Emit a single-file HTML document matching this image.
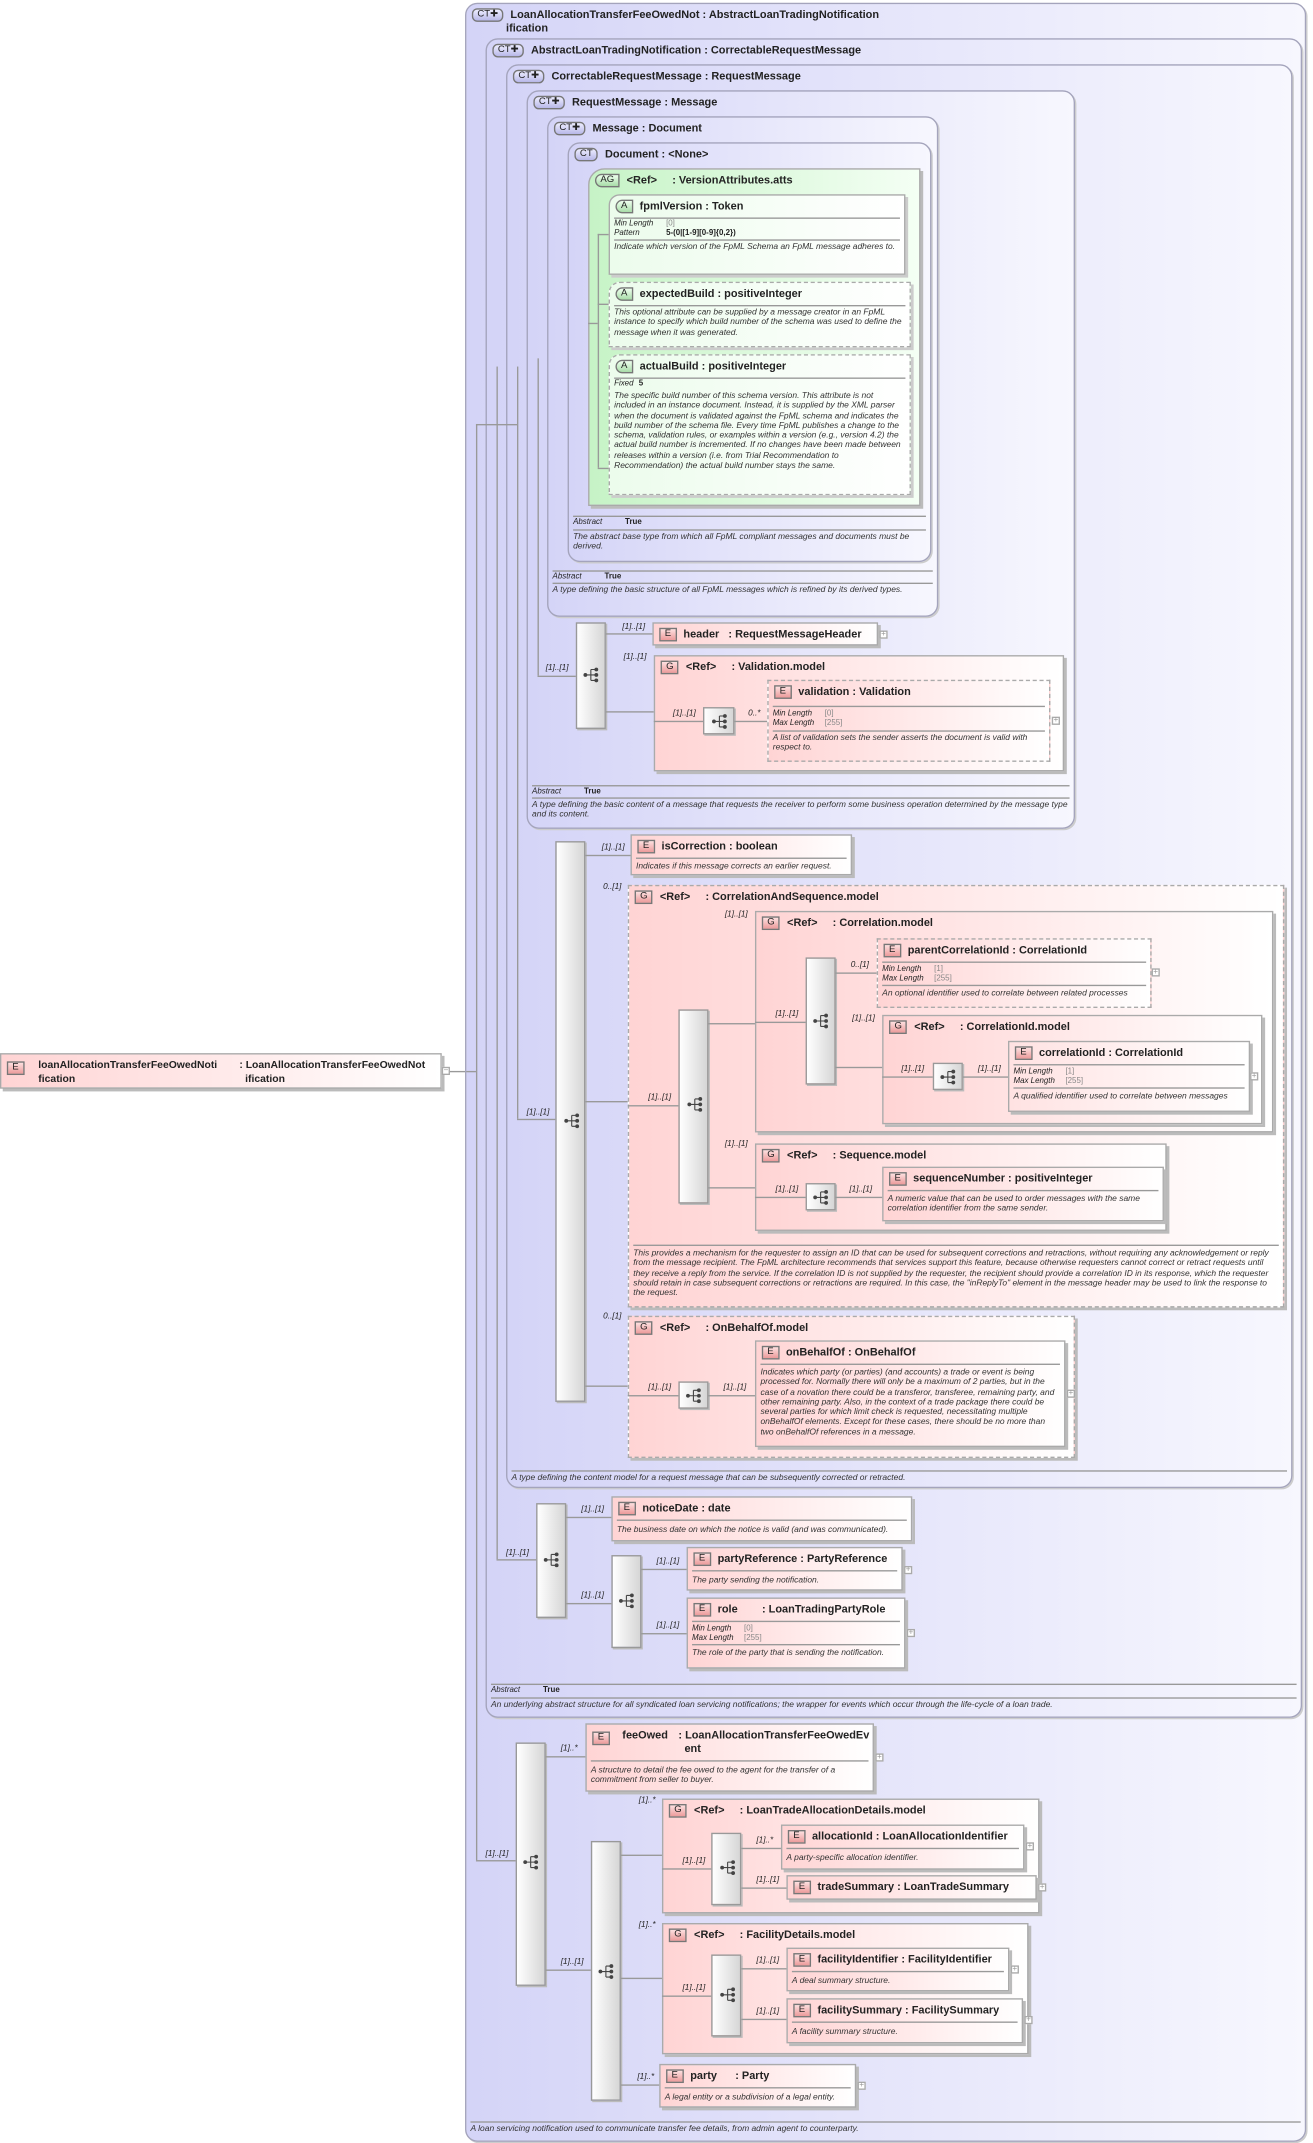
<!DOCTYPE html>
<html><head><meta charset="utf-8"><style>
html,body{margin:0;padding:0;background:#fff;width:1313px;height:2143px;overflow:hidden}
#w{position:relative;width:960px;height:1567px;transform:scale(1.36771);transform-origin:0 0;font-family:"Liberation Sans",sans-serif;color:#222}
.a{position:absolute;box-sizing:border-box}
.ct{border:1px solid #a4a4bc;border-radius:9px;background:linear-gradient(90deg,#d4d4f7,#f7f7fe);box-shadow:1px 1px 0 #ccc}
.ag{border:1px solid #aaa;background:linear-gradient(90deg,#c6f3c6,#f4fff4);box-shadow:2px 2px 0 #bbb}
.at{border:1px solid #aaa;background:linear-gradient(90deg,#ecfcec,#fff);box-shadow:2px 2px 0 #ccc}
.e{border:1px solid #aaa;background:linear-gradient(90deg,#ffd4d4,#fff);box-shadow:2px 2px 0 #bbb}
.dsh{border:1px dashed #aaa}
.h{position:absolute;left:4px;top:3px;font-size:8px;font-weight:bold;white-space:nowrap;line-height:10px}
.bd{display:inline-block;font-weight:normal;font-size:7px;border:1px solid #777;padding:0 3px;line-height:8px;margin-right:5px;vertical-align:1px}
.be{background:linear-gradient(#fde0e0,#ec9a9a)}
.bc{background:linear-gradient(#eef,#b8b8e8);border-radius:4px}
.bg{background:linear-gradient(#efe,#a8dca8);border-radius:5px 0 0 5px}
.r{position:absolute;left:3px;right:3px;border-top:1px solid #999}
.ds{position:absolute;left:3px;right:4px;font-size:6.2px;font-style:italic;line-height:7.3px;color:#333}
.pr{position:absolute;left:3px;font-size:5.8px;line-height:6.6px}
.pr i{display:inline-block;width:38px}
.pr span{color:#888}
.seq{border:1px solid #999;background:linear-gradient(90deg,#fff,#d6d6d6);box-shadow:1px 1px 0 #bbb}
.l{position:absolute;background:#999}
.m{position:absolute;font-size:6px;font-style:italic;white-space:nowrap}
.pl{position:absolute;width:6px;height:6px;border:1px solid #aaa;background:#fff;font-size:6px;line-height:5px;text-align:center;color:#999;box-sizing:border-box}
.ic{position:absolute;width:12px;height:11px}
</style></head><body><div id="w">
<svg width="0" height="0" style="position:absolute"><defs><g id="si"><circle cx="2" cy="5.5" r="1.4" fill="#444"/><path d="M2 5.5H6M6 1.5V9.5M6 1.5H10M6 5.5H10M6 9.5H10" stroke="#444" stroke-width="0.8" fill="none"/><circle cx="10" cy="1.5" r="1.4" fill="#444"/><circle cx="10" cy="5.5" r="1.4" fill="#444"/><circle cx="10" cy="9.5" r="1.4" fill="#444"/></g></defs></svg>

<div class="a e" style="left:0;top:770px;width:323px;height:26px"><div class="h" style="font-size:7.6px"><span class="bd be" style="position:absolute;left:0;top:2px">E</span><span style="position:absolute;left:23px;top:0">loanAllocationTransferFeeOwedNoti<br>fication</span><span style="position:absolute;left:170px;top:0">: LoanAllocationTransferFeeOwedNot<br>&nbsp;&nbsp;ification</span></div></div>
<div class="pl" style="left:323px;top:780px">−</div>
<div class="l" style="left:329px;top:783px;width:12px;height:1px"></div>

<div class="a ct" style="left:340px;top:2px;width:615px;height:1564px"><div class="h"><span class="bd bc">CT✚</span>LoanAllocationTransferFeeOwedNot : AbstractLoanTradingNotification<br><span style="margin-left:25px">ification</span></div>
<div class="r" style="top:1548px"></div><div class="ds" style="top:1550px">A loan servicing notification used to communicate transfer fee details, from admin agent to counterparty.</div></div>
<div class="a ct" style="left:355px;top:28px;width:597px;height:1228px"><div class="h"><span class="bd bc">CT✚</span>AbstractLoanTradingNotification : CorrectableRequestMessage</div>
<div class="r" style="top:1202px"></div><div class="pr" style="top:1204px"><i>Abstract</i><b>True</b></div><div class="r" style="top:1212px"></div><div class="ds" style="top:1214px">An underlying abstract structure for all syndicated loan servicing notifications; the wrapper for events which occur through the life-cycle of a loan trade.</div></div>
<div class="a ct" style="left:370px;top:47px;width:575px;height:1041px"><div class="h"><span class="bd bc">CT✚</span>CorrectableRequestMessage : RequestMessage</div>
<div class="r" style="top:1027px"></div><div class="ds" style="top:1029px">A type defining the content model for a request message that can be subsequently corrected or retracted.</div></div>
<div class="a ct" style="left:385px;top:66px;width:401px;height:540px"><div class="h"><span class="bd bc">CT✚</span>RequestMessage : Message</div>
<div class="r" style="top:507px"></div><div class="pr" style="top:509px"><i>Abstract</i><b>True</b></div><div class="r" style="top:516px"></div><div class="ds" style="top:518px">A type defining the basic content of a message that requests the receiver to perform some business operation determined by the message type and its content.</div></div>
<div class="a ct" style="left:400px;top:85px;width:286px;height:366px"><div class="h"><span class="bd bc">CT✚</span>Message : Document</div>
<div class="r" style="top:331px"></div><div class="pr" style="top:333px"><i>Abstract</i><b>True</b></div><div class="r" style="top:340px"></div><div class="ds" style="top:342px">A type defining the basic structure of all FpML messages which is refined by its derived types.</div></div>
<div class="a ct" style="left:415px;top:104px;width:266px;height:307px"><div class="h"><span class="bd bc">CT</span>Document : &lt;None&gt;</div>
<div class="r" style="top:272px"></div><div class="pr" style="top:274px"><i>Abstract</i><b>True</b></div><div class="r" style="top:282px"></div><div class="ds" style="top:284px">The abstract base type from which all FpML compliant messages and documents must be derived.</div></div>

<div class="a ag" style="left:430px;top:123px;width:243px;height:247px;border-radius:12px 0 0 0"><div class="h"><span class="bd bg">AG</span>&lt;Ref&gt;&nbsp;&nbsp;&nbsp;&nbsp;&nbsp;: VersionAttributes.atts</div></div>
<div class="l" style="left:437px;top:171px;width:1px;height:171px"></div>
<div class="l" style="left:437px;top:171px;width:8px;height:1px"></div>
<div class="l" style="left:437px;top:222px;width:8px;height:1px"></div>
<div class="l" style="left:437px;top:342px;width:8px;height:1px"></div>
<div class="l" style="left:430px;top:236px;width:7px;height:1px"></div>
<div class="a at" style="left:445px;top:142px;width:217px;height:59px;border-radius:8px 0 0 0"><div class="h"><span class="bd bg">A</span>fpmlVersion : Token</div>
<div class="r" style="top:16px"></div><div class="pr" style="top:18px"><i>Min Length</i><span>[0]</span><br><i>Pattern</i><b>5-(0|[1-9][0-9]{0,2})</b></div><div class="r" style="top:32px"></div><div class="ds" style="top:34px">Indicate which version of the FpML Schema an FpML message adheres to.</div></div>
<div class="a at dsh" style="left:445px;top:206px;width:221px;height:48px;border-radius:8px 0 0 0"><div class="h"><span class="bd bg">A</span>expectedBuild : positiveInteger</div>
<div class="r" style="top:16px"></div><div class="ds" style="top:18px">This optional attribute can be supplied by a message creator in an FpML instance to specify which build number of the schema was used to define the message when it was generated.</div></div>
<div class="a at dsh" style="left:445px;top:259px;width:221px;height:103px;border-radius:8px 0 0 0"><div class="h"><span class="bd bg">A</span>actualBuild : positiveInteger</div>
<div class="r" style="top:16px"></div><div class="pr" style="top:18px"><i style="width:18px">Fixed</i><b>5</b></div><div class="ds" style="top:26px">The specific build number of this schema version. This attribute is not included in an instance document. Instead, it is supplied by the XML parser when the document is validated against the FpML schema and indicates the build number of the schema file. Every time FpML publishes a change to the schema, validation rules, or examples within a version (e.g., version 4.2) the actual build number is incremented. If no changes have been made between releases within a version (i.e. from Trial Recommendation to Recommendation) the actual build number stays the same.</div></div>

<div class="l" style="left:348px;top:310px;width:1px;height:1050px"></div>
<div class="l" style="left:348px;top:310px;width:30px;height:1px"></div>
<div class="l" style="left:341px;top:783px;width:7px;height:1px"></div>
<div class="l" style="left:363px;top:268px;width:1px;height:872px"></div>
<div class="l" style="left:378px;top:268px;width:1px;height:550px"></div>
<div class="l" style="left:393px;top:262px;width:1px;height:232px"></div>

<div class="a seq" style="left:421px;top:455px;width:22px;height:78px"></div><svg class="ic" style="left:426px;top:488px"><use href="#si"/></svg>
<div class="l" style="left:393px;top:494px;width:28px;height:1px"></div><div class="m" style="left:399px;top:486px">[1]..[1]</div>
<div class="l" style="left:443px;top:463px;width:34px;height:1px"></div><div class="m" style="left:455px;top:456px">[1]..[1]</div>
<div class="l" style="left:443px;top:520px;width:35px;height:1px"></div><div class="m" style="left:456px;top:478px">[1]..[1]</div>
<div class="a e" style="left:477px;top:455px;width:165px;height:17px"><div class="h"><span class="bd be">E</span>header&nbsp;&nbsp;&nbsp;: RequestMessageHeader</div></div><div class="pl" style="left:643px;top:461px">+</div>
<div class="a e" style="left:478px;top:479px;width:300px;height:85px"><div class="h"><span class="bd be">G</span>&lt;Ref&gt;&nbsp;&nbsp;&nbsp;&nbsp;&nbsp;: Validation.model</div></div>
<div class="a seq" style="left:514px;top:517px;width:23px;height:20px"></div><svg class="ic" style="left:520px;top:522px"><use href="#si"/></svg>
<div class="l" style="left:478px;top:527px;width:36px;height:1px"></div><div class="m" style="left:492px;top:519px">[1]..[1]</div>
<div class="l" style="left:537px;top:527px;width:24px;height:1px"></div><div class="m" style="left:547px;top:519px">0..*</div>
<div class="a e dsh" style="left:561px;top:497px;width:207px;height:60px;box-shadow:none"><div class="h"><span class="bd be">E</span>validation : Validation</div>
<div class="r" style="top:18px"></div><div class="pr" style="top:21px"><i>Min Length</i><span>[0]</span><br><i>Max Length</i><span>[255]</span></div><div class="r" style="top:36px"></div><div class="ds" style="top:38px">A list of validation sets the sender asserts the document is valid with respect to.</div></div><div class="pl" style="left:769px;top:524px">+</div>

<div class="a seq" style="left:406px;top:615px;width:22px;height:410px"></div><svg class="ic" style="left:412px;top:814px"><use href="#si"/></svg>
<div class="l" style="left:378px;top:818px;width:28px;height:1px"></div><div class="m" style="left:385px;top:811px">[1]..[1]</div>
<div class="l" style="left:428px;top:625px;width:33px;height:1px"></div><div class="m" style="left:440px;top:617px">[1]..[1]</div>
<div class="a e" style="left:461px;top:610px;width:162px;height:30px"><div class="h"><span class="bd be">E</span>isCorrection : boolean</div><div class="r" style="top:16px"></div><div class="ds" style="top:19px">Indicates if this message corrects an earlier request.</div></div>
<div class="l" style="left:428px;top:805px;width:31px;height:1px"></div><div class="m" style="left:441px;top:646px">0..[1]</div>
<div class="l" style="left:428px;top:1013px;width:31px;height:1px"></div><div class="m" style="left:441px;top:960px">0..[1]</div>

<div class="a e dsh" style="left:459px;top:647px;width:480px;height:309px"><div class="h"><span class="bd be">G</span>&lt;Ref&gt;&nbsp;&nbsp;&nbsp;&nbsp;&nbsp;: CorrelationAndSequence.model</div>
<div class="r" style="top:262px"></div><div class="ds" style="top:265px">This provides a mechanism for the requester to assign an ID that can be used for subsequent corrections and retractions, without requiring any acknowledgement or reply from the message recipient. The FpML architecture recommends that services support this feature, because otherwise requesters cannot correct or retract requests until they receive a reply from the service. If the correlation ID is not supplied by the requester, the recipient should provide a correlation ID in its response, which the requester should retain in case subsequent corrections or retractions are required. In this case, the "inReplyTo" element in the message header may be used to link the response to the request.</div></div>
<div class="a seq" style="left:496px;top:738px;width:22px;height:142px"></div><svg class="ic" style="left:502px;top:802px"><use href="#si"/></svg>
<div class="l" style="left:459px;top:808px;width:37px;height:1px"></div><div class="m" style="left:474px;top:800px">[1]..[1]</div>
<div class="l" style="left:518px;top:748px;width:34px;height:1px"></div><div class="m" style="left:530px;top:666px">[1]..[1]</div>
<div class="l" style="left:518px;top:868px;width:34px;height:1px"></div><div class="m" style="left:530px;top:834px">[1]..[1]</div>

<div class="a e" style="left:552px;top:666px;width:379px;height:162px"><div class="h"><span class="bd be">G</span>&lt;Ref&gt;&nbsp;&nbsp;&nbsp;&nbsp;&nbsp;: Correlation.model</div></div>
<div class="a seq" style="left:589px;top:700px;width:22px;height:93px"></div><svg class="ic" style="left:594px;top:741px"><use href="#si"/></svg>
<div class="l" style="left:552px;top:747px;width:37px;height:1px"></div><div class="m" style="left:567px;top:739px">[1]..[1]</div>
<div class="l" style="left:611px;top:711px;width:30px;height:1px"></div><div class="m" style="left:622px;top:703px">0..[1]</div>
<div class="l" style="left:611px;top:780px;width:34px;height:1px"></div><div class="m" style="left:623px;top:742px">[1]..[1]</div>
<div class="a e dsh" style="left:641px;top:686px;width:201px;height:51px;box-shadow:none"><div class="h"><span class="bd be">E</span>parentCorrelationId : CorrelationId</div>
<div class="r" style="top:16px"></div><div class="pr" style="top:19px"><i>Min Length</i><span>[1]</span><br><i>Max Length</i><span>[255]</span></div><div class="r" style="top:33px"></div><div class="ds" style="top:36px">An optional identifier used to correlate between related processes</div></div><div class="pl" style="left:842px;top:708px">+</div>
<div class="a e" style="left:645px;top:742px;width:278px;height:80px"><div class="h"><span class="bd be">G</span>&lt;Ref&gt;&nbsp;&nbsp;&nbsp;&nbsp;&nbsp;: CorrelationId.model</div></div>
<div class="a seq" style="left:682px;top:777px;width:22px;height:20px"></div><svg class="ic" style="left:687px;top:782px"><use href="#si"/></svg>
<div class="l" style="left:645px;top:787px;width:37px;height:1px"></div><div class="m" style="left:659px;top:779px">[1]..[1]</div>
<div class="l" style="left:704px;top:787px;width:33px;height:1px"></div><div class="m" style="left:715px;top:779px">[1]..[1]</div>
<div class="a e" style="left:737px;top:761px;width:177px;height:52px;background:linear-gradient(90deg,#ffe2e2,#fff)"><div class="h"><span class="bd be">E</span>correlationId : CorrelationId</div>
<div class="r" style="top:16px"></div><div class="pr" style="top:19px"><i>Min Length</i><span>[1]</span><br><i>Max Length</i><span>[255]</span></div><div class="r" style="top:33px"></div><div class="ds" style="top:36px">A qualified identifier used to correlate between messages</div></div><div class="pl" style="left:914px;top:784px">+</div>

<div class="a e" style="left:552px;top:836px;width:301px;height:64px"><div class="h"><span class="bd be">G</span>&lt;Ref&gt;&nbsp;&nbsp;&nbsp;&nbsp;&nbsp;: Sequence.model</div></div>
<div class="a seq" style="left:589px;top:865px;width:22px;height:20px"></div><svg class="ic" style="left:594px;top:870px"><use href="#si"/></svg>
<div class="l" style="left:552px;top:875px;width:37px;height:1px"></div><div class="m" style="left:567px;top:867px">[1]..[1]</div>
<div class="l" style="left:611px;top:875px;width:34px;height:1px"></div><div class="m" style="left:621px;top:867px">[1]..[1]</div>
<div class="a e" style="left:645px;top:853px;width:206px;height:40px"><div class="h"><span class="bd be">E</span>sequenceNumber : positiveInteger</div>
<div class="r" style="top:16px"></div><div class="ds" style="top:19px">A numeric value that can be used to order messages with the same correlation identifier from the same sender.</div></div>

<div class="a e dsh" style="left:459px;top:962px;width:327px;height:104px"><div class="h"><span class="bd be">G</span>&lt;Ref&gt;&nbsp;&nbsp;&nbsp;&nbsp;&nbsp;: OnBehalfOf.model</div></div>
<div class="a seq" style="left:496px;top:1010px;width:22px;height:20px"></div><svg class="ic" style="left:501px;top:1015px"><use href="#si"/></svg>
<div class="l" style="left:459px;top:1020px;width:37px;height:1px"></div><div class="m" style="left:474px;top:1012px">[1]..[1]</div>
<div class="l" style="left:518px;top:1020px;width:34px;height:1px"></div><div class="m" style="left:529px;top:1012px">[1]..[1]</div>
<div class="a e" style="left:552px;top:980px;width:227px;height:78px"><div class="h"><span class="bd be">E</span>onBehalfOf : OnBehalfOf</div>
<div class="r" style="top:16px"></div><div class="ds" style="top:19px">Indicates which party (or parties) (and accounts) a trade or event is being processed for. Normally there will only be a maximum of 2 parties, but in the case of a novation there could be a transferor, transferee, remaining party, and other remaining party. Also, in the context of a trade package there could be several parties for which limit check is requested, necessitating multiple onBehalfOf elements. Except for these cases, there should be no more than two onBehalfOf references in a message.</div></div><div class="pl" style="left:780px;top:1016px">+</div>

<div class="a seq" style="left:392px;top:1099px;width:22px;height:84px"></div><svg class="ic" style="left:397px;top:1135px"><use href="#si"/></svg>
<div class="l" style="left:363px;top:1140px;width:29px;height:1px"></div><div class="m" style="left:370px;top:1133px">[1]..[1]</div>
<div class="l" style="left:414px;top:1109px;width:33px;height:1px"></div><div class="m" style="left:425px;top:1101px">[1]..[1]</div>
<div class="l" style="left:414px;top:1172px;width:33px;height:1px"></div><div class="m" style="left:425px;top:1164px">[1]..[1]</div>
<div class="a e" style="left:447px;top:1094px;width:220px;height:33px"><div class="h"><span class="bd be">E</span>noticeDate : date</div><div class="r" style="top:16px"></div><div class="ds" style="top:20px">The business date on which the notice is valid (and was communicated).</div></div>
<div class="a seq" style="left:447px;top:1137px;width:22px;height:68px"></div><svg class="ic" style="left:452px;top:1165px"><use href="#si"/></svg>
<div class="l" style="left:469px;top:1147px;width:33px;height:1px"></div><div class="m" style="left:480px;top:1139px">[1]..[1]</div>
<div class="l" style="left:469px;top:1194px;width:33px;height:1px"></div><div class="m" style="left:480px;top:1186px">[1]..[1]</div>
<div class="a e" style="left:502px;top:1131px;width:158px;height:32px"><div class="h"><span class="bd be">E</span>partyReference : PartyReference</div><div class="r" style="top:16px"></div><div class="ds" style="top:20px">The party sending the notification.</div></div><div class="pl" style="left:661px;top:1145px">+</div>
<div class="a e" style="left:502px;top:1168px;width:160px;height:52px"><div class="h"><span class="bd be">E</span>role&nbsp;&nbsp;&nbsp;&nbsp;&nbsp;&nbsp;&nbsp;&nbsp;: LoanTradingPartyRole</div>
<div class="r" style="top:16px"></div><div class="pr" style="top:19px"><i>Min Length</i><span>[0]</span><br><i>Max Length</i><span>[255]</span></div><div class="r" style="top:33px"></div><div class="ds" style="top:36px">The role of the party that is sending the notification.</div></div><div class="pl" style="left:663px;top:1191px">+</div>

<div class="l" style="left:348px;top:1360px;width:29px;height:1px"></div><div class="m" style="left:355px;top:1353px">[1]..[1]</div>
<div class="a seq" style="left:377px;top:1274px;width:22px;height:178px"></div><svg class="ic" style="left:382px;top:1356px"><use href="#si"/></svg>
<div class="l" style="left:399px;top:1284px;width:29px;height:1px"></div><div class="m" style="left:410px;top:1276px">[1]..*</div>
<div class="l" style="left:399px;top:1440px;width:33px;height:1px"></div><div class="m" style="left:410px;top:1432px">[1]..[1]</div>
<div class="a e" style="left:428px;top:1260px;width:211px;height:50px"><div class="h"><span class="bd be" style="position:absolute;left:0;top:2px">E</span><span style="position:absolute;left:22px">feeOwed</span><span style="position:absolute;left:63px">: LoanAllocationTransferFeeOwedEv<br>&nbsp;&nbsp;ent</span></div>
<div class="r" style="top:26px"></div><div class="ds" style="top:30px">A structure to detail the fee owed to the agent for the transfer of a commitment from seller to buyer.</div></div><div class="pl" style="left:640px;top:1282px">+</div>
<div class="a seq" style="left:432px;top:1346px;width:22px;height:190px"></div><svg class="ic" style="left:437px;top:1436px"><use href="#si"/></svg>
<div class="l" style="left:454px;top:1356px;width:30px;height:1px"></div><div class="m" style="left:467px;top:1314px">[1]..*</div>
<div class="l" style="left:454px;top:1446px;width:30px;height:1px"></div><div class="m" style="left:467px;top:1405px">[1]..*</div>
<div class="l" style="left:454px;top:1524px;width:28px;height:1px"></div><div class="m" style="left:466px;top:1516px">[1]..*</div>

<div class="a e" style="left:484px;top:1315px;width:276px;height:84px"><div class="h"><span class="bd be">G</span>&lt;Ref&gt;&nbsp;&nbsp;&nbsp;&nbsp;&nbsp;: LoanTradeAllocationDetails.model</div></div>
<div class="a seq" style="left:520px;top:1340px;width:22px;height:53px"></div><svg class="ic" style="left:526px;top:1360px"><use href="#si"/></svg>
<div class="l" style="left:484px;top:1366px;width:36px;height:1px"></div><div class="m" style="left:499px;top:1358px">[1]..[1]</div>
<div class="l" style="left:542px;top:1351px;width:29px;height:1px"></div><div class="m" style="left:553px;top:1343px">[1]..*</div>
<div class="l" style="left:542px;top:1380px;width:33px;height:1px"></div><div class="m" style="left:553px;top:1372px">[1]..[1]</div>
<div class="a e" style="left:571px;top:1334px;width:178px;height:33px"><div class="h"><span class="bd be">E</span>allocationId : LoanAllocationIdentifier</div><div class="r" style="top:16px"></div><div class="ds" style="top:20px">A party-specific allocation identifier.</div></div><div class="pl" style="left:750px;top:1347px">+</div>
<div class="a e" style="left:575px;top:1371px;width:183px;height:18px"><div class="h"><span class="bd be">E</span>tradeSummary : LoanTradeSummary</div></div><div class="pl" style="left:759px;top:1377px">+</div>

<div class="a e" style="left:484px;top:1406px;width:268px;height:96px"><div class="h"><span class="bd be">G</span>&lt;Ref&gt;&nbsp;&nbsp;&nbsp;&nbsp;&nbsp;: FacilityDetails.model</div></div>
<div class="a seq" style="left:520px;top:1429px;width:22px;height:60px"></div><svg class="ic" style="left:526px;top:1453px"><use href="#si"/></svg>
<div class="l" style="left:484px;top:1459px;width:36px;height:1px"></div><div class="m" style="left:499px;top:1451px">[1]..[1]</div>
<div class="l" style="left:542px;top:1439px;width:33px;height:1px"></div><div class="m" style="left:553px;top:1431px">[1]..[1]</div>
<div class="l" style="left:542px;top:1476px;width:33px;height:1px"></div><div class="m" style="left:553px;top:1468px">[1]..[1]</div>
<div class="a e" style="left:575px;top:1424px;width:163px;height:32px"><div class="h"><span class="bd be">E</span>facilityIdentifier : FacilityIdentifier</div><div class="r" style="top:16px"></div><div class="ds" style="top:20px">A deal summary structure.</div></div><div class="pl" style="left:739px;top:1437px">+</div>
<div class="a e" style="left:575px;top:1461px;width:173px;height:33px"><div class="h"><span class="bd be">E</span>facilitySummary : FacilitySummary</div><div class="r" style="top:16px"></div><div class="ds" style="top:20px">A facility summary structure.</div></div><div class="pl" style="left:749px;top:1474px">+</div>

<div class="a e" style="left:482px;top:1509px;width:144px;height:32px"><div class="h"><span class="bd be">E</span>party&nbsp;&nbsp;&nbsp;&nbsp;&nbsp;&nbsp;: Party</div><div class="r" style="top:16px"></div><div class="ds" style="top:20px">A legal entity or a subdivision of a legal entity.</div></div><div class="pl" style="left:627px;top:1522px">+</div>
</div></body></html>
